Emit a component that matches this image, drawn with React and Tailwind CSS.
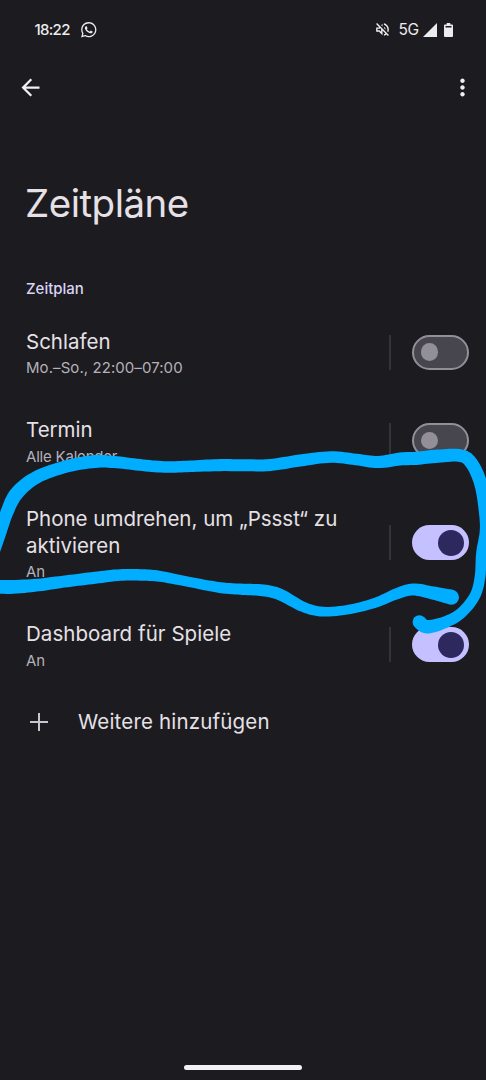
import React from "react";
import { MdArrowBack, MdMoreVert, MdOutlineVolumeOff } from "react-icons/md";
import { FaWhatsapp } from "react-icons/fa";

// Marker strokes as [x, y, width] samples along the centre line.
const MARKER = [
  [
    [451.5, 597.2, 15], [433, 593, 13], [413, 589.5, 12], [396, 594, 11], [376, 602.5, 10],
    [350, 609.3, 9.5], [323, 611.7, 9.8], [303, 606.8, 10.5], [280, 594.5, 11.8], [263, 590.3, 11.8],
    [243, 589.3, 11.3], [220, 587.6, 10.8], [187, 581.5, 10.2], [160, 576.3, 11], [143, 575, 11.5],
    [120, 575, 11.7], [95, 577.8, 12], [67, 581.2, 12], [38, 585, 12.7], [10, 587, 13.8],
    [-15, 586, 13],
  ],
  [
    [-10, 562, 12], [-1, 536, 12.5], [7, 512, 13], [17, 493, 14], [37, 477, 12.8],
    [67, 466.3, 12.5], [95, 461.5, 12.8], [117, 462.3, 12], [143, 465.3, 11.7], [167, 467, 11.5],
    [190, 466.3, 11.5], [217, 465.2, 12], [243, 465.2, 12], [270, 465, 12], [300, 460.5, 12],
    [331, 457, 11.5], [356, 459.5, 11.5], [378, 462, 12.3], [400, 459, 13], [416, 458.3, 13.2],
    [438, 456.2, 13.2], [461, 455.7, 12.8], [472, 464, 13], [480.5, 483, 13], [484.3, 507, 12],
    [485.3, 530, 11], [481.5, 553, 10.7], [480, 577, 10.7], [474.5, 596.5, 10.7], [460, 614, 11],
    [443, 623, 12], [427, 626.8, 13.5], [419.3, 622, 13.5],
  ],
];

function spline(a, b, c, d, t) {
  return 0.5 * (2 * b + (c - a) * t + (2 * a - 5 * b + 4 * c - d) * t * t + (3 * b - a - 3 * c + d) * t * t * t);
}

function outline(points) {
  const samples = [];
  for (let i = 0; i < points.length - 1; i++) {
    const p0 = points[Math.max(0, i - 1)];
    const p3 = points[Math.min(points.length - 1, i + 2)];
    for (let k = 0; k < 8; k++) {
      samples.push([0, 1, 2].map((j) => spline(p0[j], points[i][j], points[i + 1][j], p3[j], k / 8)));
    }
  }
  samples.push(points[points.length - 1]);
  const left = [];
  const right = [];
  samples.forEach(([x, y, w], i) => {
    const a = samples[Math.max(0, i - 1)];
    const b = samples[Math.min(samples.length - 1, i + 1)];
    const len = Math.hypot(b[0] - a[0], b[1] - a[1]) || 1;
    const nx = (-(b[1] - a[1]) / len) * (w / 2);
    const ny = ((b[0] - a[0]) / len) * (w / 2);
    left.push(`${(x + nx).toFixed(1)} ${(y + ny).toFixed(1)}`);
    right.unshift(`${(x - nx).toFixed(1)} ${(y - ny).toFixed(1)}`);
  });
  return `M${left.concat(right).join("L")}Z`;
}

function Marker() {
  return (
    <svg className="pointer-events-none absolute inset-0" width="486" height="1080" fill="#00adff">
      {MARKER.map((points, i) => (
        <g key={i}>
          <path d={outline(points)} />
          {[points[0], points[points.length - 1]].map(([x, y, w], k) => (
            <circle key={k} cx={x} cy={y} r={w / 2} />
          ))}
        </g>
      ))}
    </svg>
  );
}

function Toggle({ on }) {
  return on ? (
    <div className="flex h-[35px] w-[57px] items-center justify-end rounded-full bg-[#c5c0ff] pr-[5px]">
      <div className="size-[26px] rounded-full bg-[#2d285d]" />
    </div>
  ) : (
    <div className="flex h-[35px] w-[57px] items-center rounded-full border-2 border-[#928f99] bg-[#47464f] pl-[6.5px]">
      <div className="size-[17.5px] rounded-full bg-[#928f99]" />
    </div>
  );
}

function Row({ title, detail, on, height, titleClass = "", detailClass = "pt-[3px]" }) {
  return (
    <div className={`flex items-center pr-[17px] pl-[26px] ${height}`}>
      <div className="flex-1 pt-[2px] whitespace-pre-line">
        <div className={`text-[20.5px] leading-[27px] text-[#e5e1e6] ${titleClass}`}>{title}</div>
        <div className={`text-[15px] leading-[20px] text-[#b4b1ba] ${detailClass}`}>{detail}</div>
      </div>
      <div className="mr-[21px] h-[35px] w-[2px] bg-[#343338]" />
      <Toggle on={on} />
    </div>
  );
}

export default function App() {
  return (
    <div className="relative flex h-[1080px] w-[486px] flex-col overflow-hidden bg-[#1c1b1f] font-['Inter',sans-serif] text-[#e5e1e6]">
      <div className="flex h-[59px] items-center pr-[33.5px] pl-[34.5px] text-[#ececee]">
        <span className="w-[46px] pt-px text-[15px] font-medium tracking-[-0.7px]">18:22</span>
        <FaWhatsapp size={17.5} className="-ml-px" />
        <div className="flex-1" />
        <MdOutlineVolumeOff size={17} />
        <span className="ml-[8px] w-[24px] pt-px text-[15.5px] tracking-[-0.5px]">5G</span>
        <svg width="14" height="14" viewBox="0 0 14 14" fill="currentColor"><path d="M14 0V14H0Z" /></svg>
        <svg className="ml-[7px]" width="9" height="14" viewBox="0 0 9 14" fill="currentColor">
          <path fillRule="evenodd" d="M2.7 0H6.3V1.4H8a1 1 0 0 1 1 1V13a1 1 0 0 1-1 1H1a1 1 0 0 1-1-1V2.4a1 1 0 0 1 1-1H2.7ZM1.5 3V4.6H7.5V3Z" />
        </svg>
      </div>
      <div className="flex h-[58px] items-center justify-between pr-[10.5px] pb-[2px] pl-[17px] text-[#f1eff4]">
        <MdArrowBack size={27} />
        <MdMoreVert size={27} />
      </div>
      <h1 className="mt-[62px] pl-[25px] text-[38.5px] leading-[48px] tracking-[-0.5px]">Zeitpläne</h1>
      <h2 className="mt-[52px] h-[29px] pl-[26px] text-[15px] leading-[20px] font-medium text-[#dad4f6]">Zeitplan</h2>
      <Row height="h-[88px]" title="Schlafen" detail="Mo.–So., 22:00–07:00" detailClass="pt-[3px] tracking-[0.07px]" />
      <Row height="h-[88.5px]" title="Termin" detail="Alle Kalender" detailClass="pt-[4px] tracking-[-0.2px]" />
      <Row height="h-[116px]" title={"Phone umdrehen, um „Pssst“ zu\naktivieren"} detail="An" on />
      <Row height="h-[88px]" title="Dashboard für Spiele" detail="An" on titleClass="tracking-[0.05px]" detailClass="pt-[4px]" />
      <div className="flex h-[66px] items-center pl-[30px]">
        <svg width="18" height="18" viewBox="0 0 18 18" stroke="#c8c5d0" strokeWidth="2"><path d="M9 0V18M0 9H18" /></svg>
        <span className="ml-[30px] pt-[2px] text-[20.5px] tracking-[0.17px]">Weitere hinzufügen</span>
      </div>
      <div className="mt-auto mb-[10.5px] ml-[184px] h-[5px] w-[118px] rounded-full bg-[#f3f1f3]" />
      <Marker />
    </div>
  );
}
